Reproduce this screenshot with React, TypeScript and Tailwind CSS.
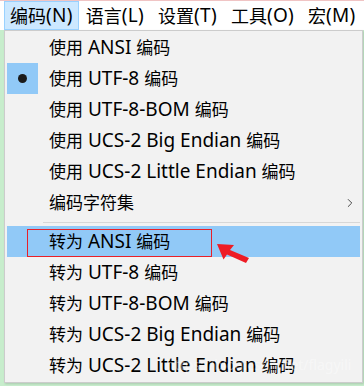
import { ChevronRight } from "lucide-react"

const font = { fontFamily: '"Noto Sans", "Noto Sans CJK SC", sans-serif' }

const topItems = ["编码(N)", "语言(L)", "设置(T)", "工具(O)", "宏(M)"]

const useItems = [
  "使用 ANSI 编码",
  "使用 UTF-8 编码",
  "使用 UTF-8-BOM 编码",
  "使用 UCS-2 Big Endian 编码",
  "使用 UCS-2 Little Endian 编码",
]

const convertItems = [
  "转为 ANSI 编码",
  "转为 UTF-8 编码",
  "转为 UTF-8-BOM 编码",
  "转为 UCS-2 Big Endian 编码",
  "转为 UCS-2 Little Endian 编码",
]

// latin runs render a touch wider than the CJK runs, like Segoe UI next to YaHei
function Label({ text, latin }: { text: string; latin: string }) {
  const parts = text.split(/([\u4e00-\u9fff]+)/).filter(Boolean)
  return (
    <>
      {parts.map((p, i) =>
        /[\u4e00-\u9fff]/.test(p) ? (
          <span key={i}>{p}</span>
        ) : (
          <span key={i} className={latin}>
            {p}
          </span>
        )
      )}
    </>
  )
}

function MenuItem({ label, checked, active, sub }: { label: string; checked?: boolean; active?: boolean; sub?: boolean }) {
  return (
    <div className={`relative flex h-[31px] items-center ${active ? "bg-[#91c9f7]" : ""}`}>
      <div className={`flex h-full w-[31px] items-center justify-center ${checked ? "bg-[#91c9f7]" : ""}`}>
        {checked && <div className="h-[9px] w-[9px] rounded-full bg-[#1a1a1a]" />}
      </div>
      <span className="ml-[11px] text-[17px] leading-none whitespace-pre text-black">
        <Label text={label} latin="text-[19px]" />
      </span>
      {sub && <ChevronRight className="absolute right-[3px] h-[14px] w-[14px] text-[#333]" strokeWidth={1.5} />}
    </div>
  )
}

export default function App() {
  return (
    <div className="relative h-[386px] w-[364px] overflow-hidden bg-[#c7edcc]" style={font}>
      <div className="h-[1px] bg-[#f0c4c4]" />
      <div className="flex h-[29px] items-stretch bg-white pl-[4px]">
        {topItems.map((t, i) => (
          <div
            key={t}
            className={`flex items-center text-[18px] leading-none text-black ${
              i === 0 ? "border border-[#99d1ff] bg-[#cce8ff] px-[5px]" : "px-[7px]"
            }`}
          >
            <Label text={t} latin="text-[19px] tracking-[0.3px]" />
          </div>
        ))}
      </div>

      <div className="ml-[4px] w-[359px] border border-[#cccccc] bg-[#f2f2f2] px-[2px] py-[1px] shadow-[1px_1px_2px_rgba(0,0,0,0.15)]">
        {useItems.map((t, i) => (
          <MenuItem key={t} label={t} checked={i === 1} />
        ))}
        <MenuItem label="编码字符集" sub />
        <div className="flex h-[8px] items-center pl-[36px]">
          <div className="h-[1px] w-full bg-[#d7d7d7]" />
        </div>
        {convertItems.map((t, i) => (
          <MenuItem key={t} label={t} active={i === 0} />
        ))}
      </div>

      {/* annotation box and arrow */}
      <div className="absolute left-[27px] top-[229px] h-[28px] w-[185px] border border-[#e8202a]" />
      <svg className="absolute left-[215px] top-[242px]" width="38" height="24" viewBox="0 0 38 24">
        <path d="M2 2 L19 3 L15 8 L34 16 L31 21 L12 12.5 L8.5 17.5 Z" fill="#ee1c25" />
      </svg>

      <div className="absolute left-[166px] top-[358px] text-[14px] leading-none text-white/40">
        https://blog.csdn.net/flagyili
      </div>
    </div>
  )
}
